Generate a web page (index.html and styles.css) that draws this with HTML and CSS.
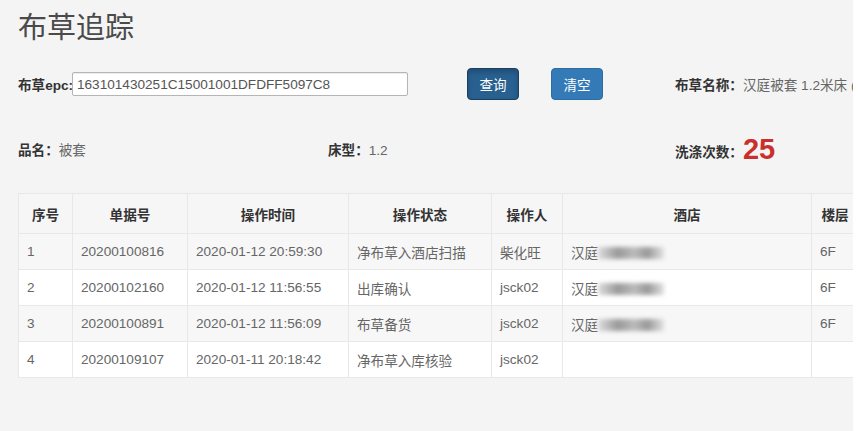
FILE: index.html
```html
<!DOCTYPE html>
<html lang="zh-CN">
<head>
  <meta charset="UTF-8" />
  <title>布草追踪</title>
  <link rel="stylesheet" href="styles.css">
</head>
<body>
  <div class="page">
    <h1>布草追踪</h1>

    <div class="search-row">
      <label for="epc">布草epc:</label>
      <input type="text" id="epc" value="163101430251C15001001DFDFF5097C8" />
      <button class="btn btn-active">查询</button>
      <button class="btn">清空</button>
      <div class="field name-field"><b>布草名称：</b>汉庭被套 1.2米床 (</div>
    </div>

    <div class="info-row">
      <div class="field"><b>品名：</b>被套</div>
      <div class="field"><b>床型：</b>1.2</div>
      <div class="field"><b>洗涤次数：</b><span class="count">25</span></div>
    </div>

    <table class="records">
      <thead>
        <tr>
          <th class="c-no">序号</th>
          <th class="c-bill">单据号</th>
          <th class="c-time">操作时间</th>
          <th class="c-state">操作状态</th>
          <th class="c-user">操作人</th>
          <th class="c-hotel">酒店</th>
          <th class="c-floor">楼层</th>
        </tr>
      </thead>
      <tbody>
        <tr>
          <td>1</td>
          <td>20200100816</td>
          <td>2020-01-12 20:59:30</td>
          <td>净布草入酒店扫描</td>
          <td>柴化旺</td>
          <td>汉庭<span class="masked"></span></td>
          <td>6F</td>
        </tr>
        <tr>
          <td>2</td>
          <td>20200102160</td>
          <td>2020-01-12 11:56:55</td>
          <td>出库确认</td>
          <td>jsck02</td>
          <td>汉庭<span class="masked"></span></td>
          <td>6F</td>
        </tr>
        <tr>
          <td>3</td>
          <td>20200100891</td>
          <td>2020-01-12 11:56:09</td>
          <td>布草备货</td>
          <td>jsck02</td>
          <td>汉庭<span class="masked"></span></td>
          <td>6F</td>
        </tr>
        <tr>
          <td>4</td>
          <td>20200109107</td>
          <td>2020-01-11 20:18:42</td>
          <td>净布草入库核验</td>
          <td>jsck02</td>
          <td></td>
          <td></td>
        </tr>
      </tbody>
    </table>
  </div>
</body>
</html>
```

FILE: styles.css
```css
body {
  margin: 0;
  background: #fff;
  font-family: "Liberation Sans", "Noto Sans CJK SC", sans-serif;
  font-size: 13.6px;
  color: #666;
}
.page {
  width: 835px;
  height: 431px;
  padding-left: 18px;
  background: #f4f4f4;
  overflow: hidden;
}
h1 {
  margin: 0;
  padding-top: 10px;
  height: 45px;
  font-size: 29px;
  font-weight: normal;
  line-height: 36px;
  color: #4a4a4a;
}
.search-row {
  display: flex;
  align-items: center;
  height: 32px;
  margin-top: 13px;
}
.search-row label {
  flex: none;
  width: 54px;
  font-weight: bold;
  color: #333;
  white-space: nowrap;
}
.search-row input {
  flex: none;
  width: 326px;
  height: 22px;
  padding: 0 4px;
  border: 1px solid #b5b5b5;
  border-radius: 2px;
  background: #fff;
  font-family: inherit;
  font-size: 13.6px;
  color: #555;
  box-shadow: inset 0 1px 1px rgba(0,0,0,0.08);
}
.btn {
  flex: none;
  width: 52px;
  height: 32px;
  margin-left: 32px;
  padding: 0;
  background: #337ab7;
  border: 1px solid #2e6da4;
  border-radius: 4px;
  color: #fff;
  font-family: inherit;
  font-size: 13.6px;
}
.btn-active {
  margin-left: 59px;
  background: #286090;
  border-color: #1b3f5f;
  box-shadow: inset 0 3px 5px rgba(0,0,0,0.2);
}
.field b {
  color: #333;
}
.name-field {
  margin-left: 72px;
  white-space: nowrap;
}
.info-row {
  display: grid;
  grid-template-columns: 310px 347px 1fr;
  align-items: center;
  height: 40px;
  margin-top: 29px;
}
.count {
  font-size: 29px;
  font-weight: bold;
  color: #c9302c;
  vertical-align: -2px;
}
.records {
  margin-top: 24px;
  width: 841px;
  border-collapse: collapse;
  background: #fff;
}
.records th,
.records td {
  border: 1px solid #e8e8e8;
  padding: 0 8px;
  text-align: left;
  white-space: nowrap;
}
.records th {
  height: 39px;
  text-align: center;
  color: #333;
  background: #f6f6f6;
}
.records td {
  height: 35px;
}
.records tbody tr:nth-child(odd) {
  background: #f7f7f7;
}
.c-no { width: 37px; }
.c-bill { width: 98px; }
.c-time { width: 144px; }
.c-state { width: 126px; }
.c-user { width: 54px; }
.c-hotel { width: 232px; }
.c-floor { width: 30px; }
.masked {
  display: inline-block;
  width: 66px;
  height: 12px;
  vertical-align: -1px;
  background: linear-gradient(90deg, #ddd, #999 30%, #bbb 55%, #999 75%, #e2e2e2);
  filter: blur(2px);
}
```
